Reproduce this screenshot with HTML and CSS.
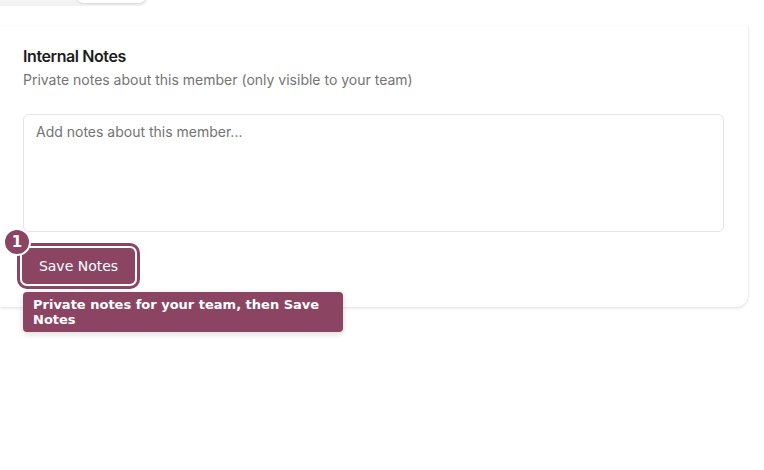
FILE: index.html
```html
<!DOCTYPE html>
<html>
<head>
<meta charset="utf-8">
<link rel="stylesheet" href="styles.css">
</head>
<body>
<div class="tabs">
  <div class="tab"></div>
  <div class="tab active"></div>
</div>
<section class="card">
  <h2 class="title">Internal Notes</h2>
  <p class="desc">Private notes about this member (only visible to your team)</p>
  <textarea class="notes" placeholder="Add notes about this member..."></textarea>
  <div class="actions">
    <button class="save">Save Notes</button>
    <span class="badge">1</span>
    <div class="tip">Private notes for your team, then Save Notes</div>
  </div>
</section>
</body>
</html>
```
FILE: styles.css
```css
* { box-sizing: border-box; }
html, body { margin: 0; padding: 0; background: #fff; }
body { font-family: Inter, "Liberation Sans", sans-serif; width: 764px; height: 470px; overflow: hidden; }
.tabs {
  display: flex;
  width: 148px;
  height: 36px;
  margin-top: -30px;
  background: #f3f3f3;
  border-radius: 0 0 8px 0;
  padding: 0 3px 3px 0;
  justify-content: flex-end;
  align-items: stretch;
}
.tab { width: 77px; }
.tab.active {
  width: 68px;
  background: #fff;
  border-radius: 6px;
  box-shadow: 0 1px 2px rgba(0,0,0,0.12);
}
.card {
  width: 748px;
  margin-top: 20px;
  background: #fff;
  border-radius: 0 0 12px 0;
  box-shadow: 0 2px 3px rgba(0,0,0,0.08), 1px 0 2px rgba(0,0,0,0.05);
  padding: 20px 23px 23px 23px;
}
.title {
  margin: 0;
  font-size: 16px;
  font-weight: 600;
  letter-spacing: -0.4px;
  color: #1c1c1c;
  line-height: 20px;
}
.desc {
  margin: 4px 0 0;
  font-size: 14px;
  color: #747474;
  line-height: 20px;
}
.notes {
  display: block;
  width: 701px;
  height: 118px;
  margin-top: 24px;
  border: 1px solid #e4e4e4;
  border-radius: 6px;
  padding: 8px 12px;
  font-family: Inter, "Liberation Sans", sans-serif;
  font-size: 14px;
  resize: none;
  outline: none;
}
.notes::placeholder { color: #737373; }
.actions { position: relative; margin-top: 16px; height: 36px; }
.save {
  display: block;
  height: 36px;
  width: 113px;
  margin-left: -1px;
  padding: 0;
  background: #8b4563;
  color: #fff;
  border: none;
  border-radius: 5px;
  font-family: "DejaVu Sans", sans-serif;
  font-size: 14px;
  box-shadow: 0 0 0 2px #fff, 0 0 0 5px #8b4563;
}
.badge {
  position: absolute;
  left: -20px;
  top: -20px;
  width: 28px;
  height: 28px;
  border-radius: 50%;
  background: #8b4563;
  border: 2px solid #fff;
  color: #fff;
  font-family: "DejaVu Sans", sans-serif;
  font-weight: bold;
  font-size: 15px;
  display: flex;
  align-items: center;
  justify-content: center;
}
.tip {
  position: absolute;
  left: 0;
  top: 44px;
  width: 320px;
  background: #8b4563;
  color: #fff;
  font-family: "DejaVu Sans", sans-serif;
  font-weight: bold;
  font-size: 13px;
  line-height: 15px;
  padding: 5px 10px;
  border-radius: 4px;
  box-shadow: 0 2px 6px rgba(0,0,0,0.15);
}
```
